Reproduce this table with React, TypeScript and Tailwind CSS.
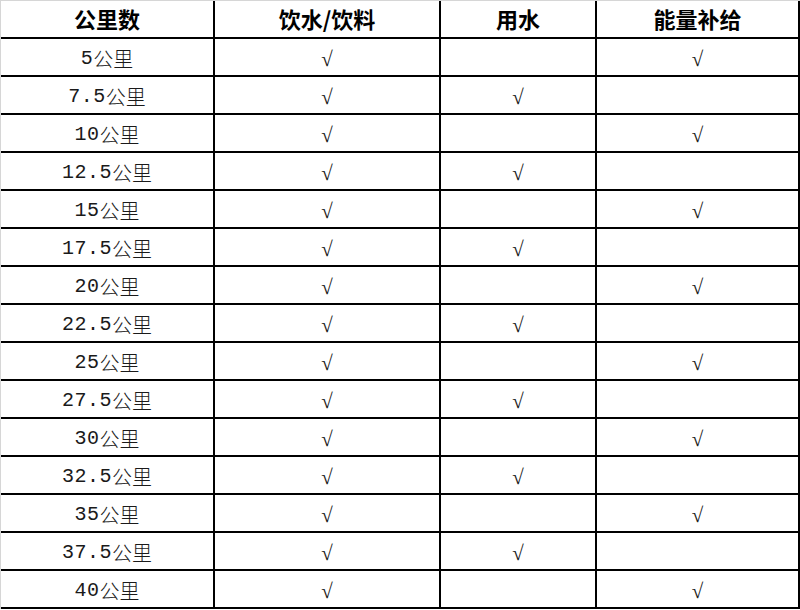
import React from "react";

const rows = [5, 7.5, 10, 12.5, 15, 17.5, 20, 22.5, 25, 27.5, 30, 32.5, 35, 37.5, 40];

function Cell({ children, className = "" }: { children?: React.ReactNode; className?: string }) {
  return (
    <div className={"flex items-center justify-center border-r-2 border-b-2 border-black " + className}>
      {children}
    </div>
  );
}

function Check() {
  return (
    <span className="mt-[5px] text-[21px] leading-none text-[#1a1a1a] font-['Liberation_Serif',serif]">
      √
    </span>
  );
}

export default function App() {
  return (
    <div className="w-[800px] h-[610px] bg-white">
      <div className="w-[800px] border-l border-t border-[#d6d6d6] grid grid-cols-[214px_226px_156px_203px] auto-rows-[38px]">
        {["公里数", "饮水/饮料", "用水", "能量补给"].map((h) => (
          <Cell key={h} className="text-[22px] font-semibold text-black font-['Noto_Sans_CJK_SC',sans-serif]">
            <span className="mb-[2px]">{h}</span>
          </Cell>
        ))}
        {rows.map((r) => {
          const half = r % 1 !== 0;
          return (
            <React.Fragment key={r}>
              <Cell className="text-[20px] text-[#1a1a1a]">
                <span className="mt-[3px] font-['Liberation_Mono',monospace] tracking-[0.5px]">{String(r)}</span>
                <span className="mt-[3px] font-['Noto_Sans_CJK_SC',sans-serif] font-light">公里</span>
              </Cell>
              <Cell>
                <Check />
              </Cell>
              <Cell>{half ? <Check /> : null}</Cell>
              <Cell>{!half ? <Check /> : null}</Cell>
            </React.Fragment>
          );
        })}
      </div>
    </div>
  );
}
